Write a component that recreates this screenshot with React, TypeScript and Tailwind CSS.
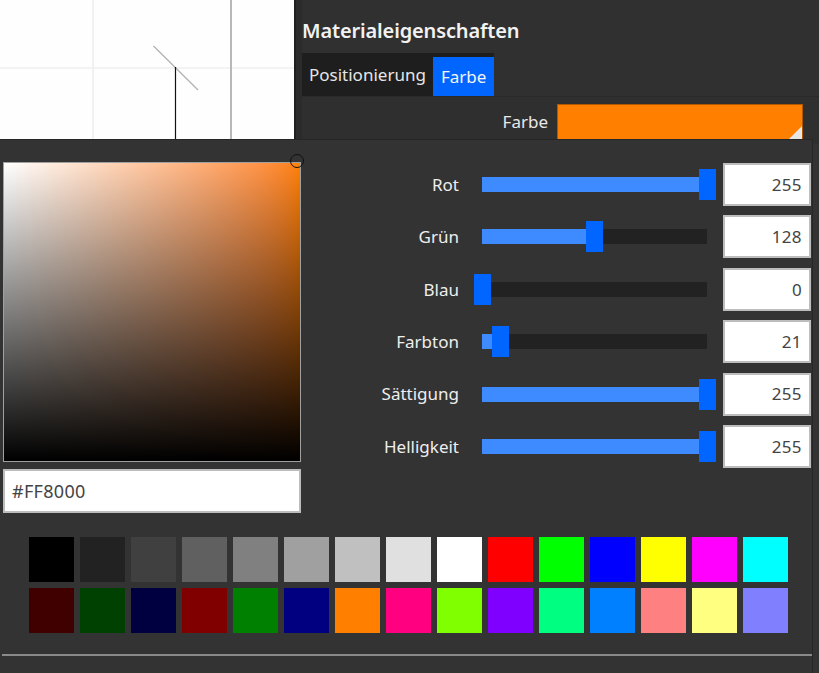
import React from "react";

const font = { fontFamily: '"Noto Sans", "Open Sans", sans-serif' };

type SliderRow = { label: string; value: number };

const rows: SliderRow[] = [
  { label: "Rot", value: 255 },
  { label: "Grün", value: 128 },
  { label: "Blau", value: 0 },
  { label: "Farbton", value: 21 },
  { label: "Sättigung", value: 255 },
  { label: "Helligkeit", value: 255 },
];

const swatches = [
  "#000000", "#222222", "#404040", "#606060", "#808080", "#a0a0a0", "#c0c0c0", "#e0e0e0",
  "#ffffff", "#ff0000", "#00ff00", "#0000ff", "#ffff00", "#ff00ff", "#00ffff",
  "#400000", "#004000", "#000040", "#800000", "#008000", "#000080", "#ff8000", "#ff0080",
  "#80ff00", "#8000ff", "#00ff80", "#0080ff", "#ff8080", "#ffff80", "#8080ff",
];

function Slider({ value }: { value: number }) {
  const pos = (value / 255) * 225;
  return (
    <div className="relative h-[15px] w-[225px] bg-[#222222]">
      <div className="absolute left-0 top-0 h-full bg-[#3d8bff]" style={{ width: pos }} />
      <div
        className="absolute top-[-8px] h-[31px] w-[17px] bg-[#0066ff]"
        style={{ left: pos - 8.5 }}
      />
    </div>
  );
}

function Viewport() {
  return (
    <div className="relative h-[139px] w-[294px] bg-[#fefefe]">
      <svg width="294" height="139" className="absolute inset-0">
        <line x1="93" y1="0" x2="93" y2="139" stroke="#ececec" strokeWidth="1.5" />
        <line x1="0" y1="68" x2="294" y2="68" stroke="#f0eeee" strokeWidth="1.5" />
        <line x1="231" y1="0" x2="231" y2="139" stroke="#b8b8b8" strokeWidth="2" />
        <line x1="153.5" y1="46" x2="198" y2="90" stroke="#b0b0b0" strokeWidth="1.2" />
        <line x1="175.5" y1="67" x2="175.5" y2="139" stroke="#111111" strokeWidth="1.2" />
      </svg>
    </div>
  );
}

export default function App() {
  return (
    <div className="h-[673px] w-[819px] overflow-hidden bg-[#333333] text-[#e8e8e8]" style={font}>
      {/* upper area: 3D viewport and property panel */}
      <div className="flex h-[139px]">
        <Viewport />
        <div className="flex flex-1 flex-col border-l-[2px] border-[#1f1f1f] bg-[#2b2b2b] pl-[6px]">
          <div className="flex flex-1 flex-col bg-[#303030]">
            <div className="pt-[17px] text-[20px] font-semibold leading-[27px] tracking-[-0.15px] text-[#f2f2f2]">
              Materialeigenschaften
            </div>
            <div className="mt-[9px] flex h-[43px] w-fit items-end bg-[#1e1e1e]">
              <div className="flex h-[43px] items-center pl-[7px] pr-[7px] text-[17px] text-[#e6e6e6]">
                Positionierung
              </div>
              <div className="flex h-[39px] items-center bg-[#0066ff] px-[8px] text-[17px] text-[#f4f4f4]">
                Farbe
              </div>
            </div>
            <div className="flex flex-1 items-start border-t border-[#2a2a2a] bg-[#2f2f2f] pt-[7px]">
              <div className="w-[255px] pr-[9px] pt-[6px] text-right text-[17px] leading-[24px]">Farbe</div>
              <div className="relative h-[40px] w-[246px] border border-[#b05800] bg-[#ff8000]">
                <div
                  className="absolute bottom-[4px] right-0 h-[13px] w-[13px] bg-[#e6e6e6]"
                  style={{ clipPath: "polygon(100% 0, 100% 100%, 0 100%)" }}
                />
              </div>
            </div>
          </div>
        </div>
      </div>

      {/* color picker popup */}
      <div className="relative h-[534px] w-[813px] border-r border-t border-[#262626] bg-[#333333]">
        <div className="flex pl-[3px] pt-[22px]">
          <div className="flex w-[298px] flex-col">
            <div className="relative h-[300px] w-[298px] border border-[#a0a0a0]">
              <div className="absolute inset-0 bg-gradient-to-r from-white to-[#ff8000]" />
              <div className="absolute inset-0 bg-gradient-to-b from-transparent to-black" />
            </div>
            <div className="mt-[7px] flex h-[44px] items-center border-2 border-[#bdbdbd] bg-white pl-[7px] text-[18px] tracking-[0.3px] text-[#444444]">
              #FF8000
            </div>
          </div>
          <div className="flex flex-col gap-[9.4px] pt-[1px]">
            {rows.map((r) => (
              <div key={r.label} className="flex h-[43px] items-center">
                <div className="w-[158px] text-right text-[17px] text-[#eeeeee]">{r.label}</div>
                <div className="ml-[23px]">
                  <Slider value={r.value} />
                </div>
                <div className="ml-[16px] flex h-[43px] w-[88px] items-center justify-end border-2 border-[#bdbdbd] bg-white pr-[7px] text-[17px] tracking-[0.4px] text-[#444444]">
                  {r.value}
                </div>
              </div>
            ))}
          </div>
        </div>

        <div className="ml-[29px] mt-[24px] grid w-fit grid-cols-[repeat(15,45px)] gap-[6px]">
          {swatches.map((c, i) => (
            <div key={i} className="h-[45px] w-[45px]" style={{ backgroundColor: c }} />
          ))}
        </div>

        <div className="ml-[2px] mt-[21px] h-[2px] w-[810px] bg-[#8a8a8a]" />

        {/* selection marker on the saturation/value square */}
        <div className="absolute left-[290px] top-[14px] h-[14px] w-[14px] rounded-full border-[1.5px] border-[#111111]" />
      </div>
    </div>
  );
}
